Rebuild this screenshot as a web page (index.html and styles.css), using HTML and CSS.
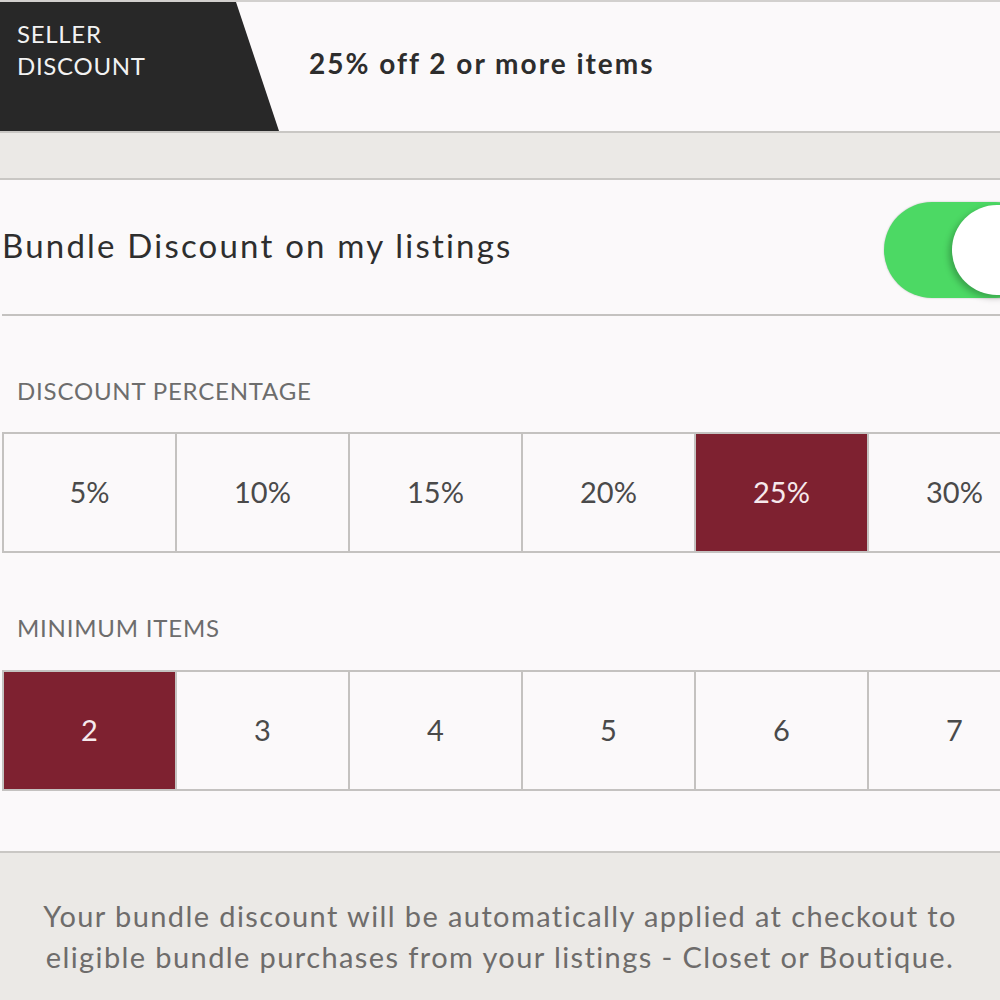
FILE: index.html
```html
<!DOCTYPE html>
<html>
<head>
<meta charset="utf-8">
<link rel="stylesheet" href="styles.css">
</head>
<body>
<div class="page">
  <header class="banner">
    <div class="badge"><span>SELLER<br>DISCOUNT</span></div>
    <div class="summary">25% off 2 or more items</div>
  </header>
  <div class="gap"></div>
  <section class="panel">
    <div class="toggle-row">
      <div class="toggle-label">Bundle Discount on my listings</div>
      <div class="switch"><div class="knob"></div></div>
    </div>
    <div class="label">DISCOUNT PERCENTAGE</div>
    <div class="options">
      <div class="opt">5%</div>
      <div class="opt">10%</div>
      <div class="opt">15%</div>
      <div class="opt">20%</div>
      <div class="opt sel">25%</div>
      <div class="opt">30%</div>
    </div>
    <div class="label label2">MINIMUM ITEMS</div>
    <div class="options options2">
      <div class="opt sel">2</div>
      <div class="opt">3</div>
      <div class="opt">4</div>
      <div class="opt">5</div>
      <div class="opt">6</div>
      <div class="opt">7</div>
    </div>
  </section>
  <footer class="note">Your bundle discount will be automatically applied at checkout to eligible bundle purchases from your listings - Closet or Boutique.</footer>
</div>
</body>
</html>
```
FILE: styles.css
```css
html, body {
  margin: 0;
  padding: 0;
  background: #ebe9e6;
  overflow: hidden;
}
.page {
  width: 1000px;
  height: 1000px;
  overflow: hidden;
  font-family: "Lato", "Open Sans", sans-serif;
}
.banner {
  height: 129px;
  border-top: 2px solid #d2d0ce;
  border-bottom: 2px solid #c9c7c4;
  background: #fbf9fa;
  display: flex;
  align-items: center;
}
.badge {
  width: 279px;
  height: 100%;
  background: #282828;
  clip-path: polygon(0 0, 236px 0, 279px 100%, 0 100%);
  color: #f2f2f2;
  font-size: 24px;
  line-height: 32px;
  letter-spacing: 0.7px;
  flex: 0 0 auto;
  box-sizing: border-box;
  padding: 16px 0 0 17px;
}
.summary {
  margin-left: 30px;
  font-size: 28px;
  font-weight: 700;
  color: #2d2d2d;
  margin-top: -7px;
  letter-spacing: 2px;
}
.gap {
  height: 45px;
  background: #ebe9e6;
  border-bottom: 2px solid #c9c7c4;
}
.panel {
  background: #fbf9fa;
  height: 671px;
  border-bottom: 2px solid #c9c7c4;
}
.toggle-row {
  height: 134px;
  margin-left: 2px;
  border-bottom: 2px solid #c4c2c0;
  display: flex;
  align-items: center;
  justify-content: space-between;
}
.toggle-label {
  font-size: 33px;
  letter-spacing: 2.2px;
  color: #2e2e2e;
  margin-top: -5px;
}
.switch {
  width: 160px;
  height: 96px;
  border-radius: 48px;
  background: #4cd964;
  box-shadow: 0 0 2px rgba(0,0,0,0.25);
  margin-right: -44px;
  margin-top: 6px;
  position: relative;
  flex: 0 0 auto;
}
.knob {
  position: absolute;
  left: 68px;
  top: 3px;
  width: 90px;
  height: 90px;
  border-radius: 50%;
  background: #fff;
  box-shadow: -3px 3px 6px rgba(0,0,0,0.25);
}
.label {
  font-size: 24px;
  letter-spacing: 0.8px;
  color: #6d6d6d;
  padding: 60px 0 0 17px;
  line-height: 30px;
}
.label2 {
  padding-top: 60px;
}
.options {
  display: flex;
  margin-left: 2px;
  margin-top: 26px;
  border-top: 2px solid #c4c2c0;
  border-bottom: 2px solid #c4c2c0;
  border-left: 2px solid #c4c2c0;
  width: 1200px;
}
.options2 {
  margin-top: 27px;
}
.opt {
  flex: 0 0 173px;
  box-sizing: border-box;
  width: 173px;
  height: 117px;
  border-right: 2px solid #c4c2c0;
  display: flex;
  align-items: center;
  justify-content: center;
  font-size: 29px;
  color: #4a4a4a;
  padding-bottom: 3px;
}
.opt.sel {
  background: #7e2130;
  color: #f6e9ec;
}
.note {
  padding: 42px 40px 0 40px;
  text-align: center;
  font-size: 29px;
  line-height: 41px;
  letter-spacing: 1.4px;
  color: #6e6c6b;
}
```
